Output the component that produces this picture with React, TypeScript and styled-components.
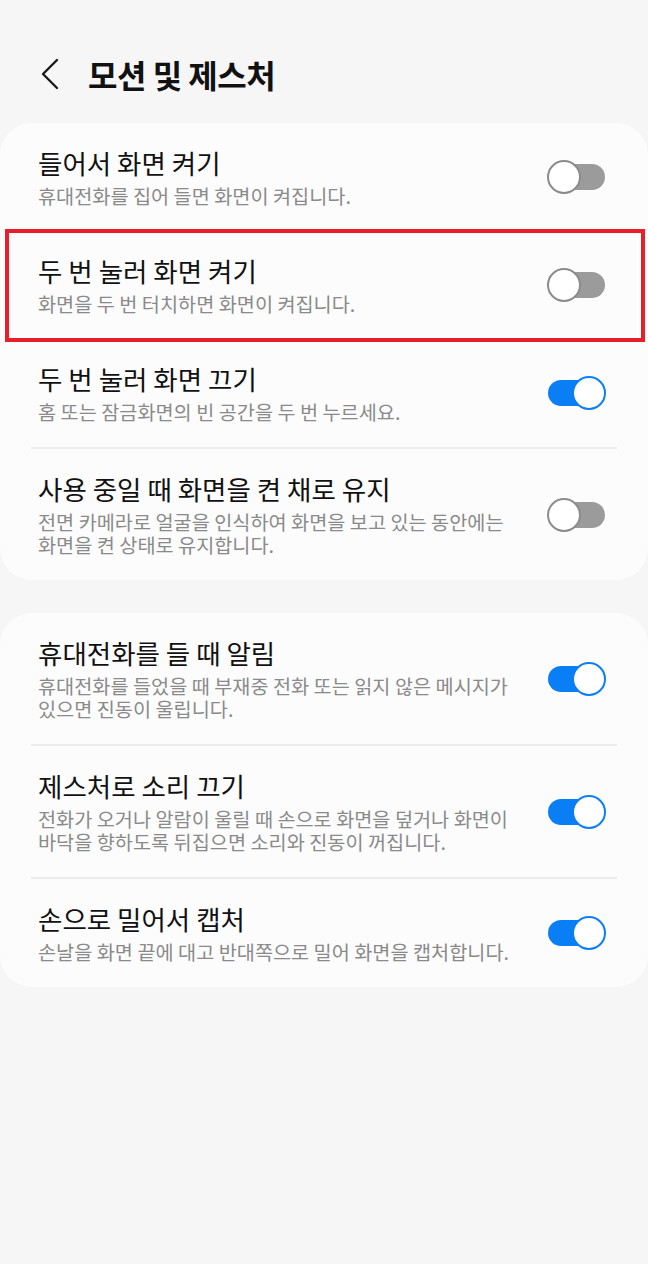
import React from 'react';
import styled, { createGlobalStyle } from 'styled-components';

const GlobalStyle = createGlobalStyle`
  html, body { margin: 0; padding: 0; background: #f6f6f6; }
  body { font-family: "Noto Sans CJK KR", "Noto Sans", sans-serif; }
`;

const Screen = styled.div`
  min-height: 1264px;
  background: #f6f6f6;
  display: flex;
  flex-direction: column;
`;

const Header = styled.header`
  display: flex;
  align-items: center;
  height: 48px;
  padding: 50px 0 25px 36px;
`;

const BackButton = styled.button`
  display: flex;
  align-items: center;
  justify-content: center;
  width: 28px;
  height: 40px;
  padding: 0;
  border: 0;
  background: none;
  margin-right: 24px;
`;

const Title = styled.h1`
  margin: 0;
  font-size: 32px;
  line-height: 48px;
  font-weight: 700;
  color: #111;
  letter-spacing: -0.5px;
`;

const Card = styled.section`
  background: #fcfcfc;
  border-radius: 32px;
  margin-bottom: 33px;
`;

const Row = styled.div<{ $highlighted?: boolean }>`
  position: relative;
  display: flex;
  align-items: center;
  gap: 20px;
  padding: 24px 42px 24px 38px;

  ${({ $highlighted }) =>
    $highlighted &&
    `
    &::after {
      content: '';
      position: absolute;
      left: 5px;
      right: 3px;
      top: -2px;
      bottom: -3px;
      border: 4px solid #e81e2a;
      pointer-events: none;
    }
  `}
`;

const Texts = styled.div`
  flex: 1;
  min-width: 0;
`;

const RowTitle = styled.div`
  font-size: 26.5px;
  line-height: 32px;
  color: #111;
`;

const RowSub = styled.div`
  margin-top: 5px;
  font-size: 19.7px;
  line-height: 23px;
  color: #8a8a8a;
  white-space: nowrap;
`;

const Divider = styled.div`
  height: 2px;
  margin: 0 31px;
  background: #ececec;
`;

const SwitchBox = styled.div`
  position: relative;
  flex-shrink: 0;
  width: 59px;
  height: 34px;
`;

const Track = styled.div<{ $on: boolean }>`
  position: absolute;
  left: 1px;
  right: 1px;
  top: 4px;
  height: 26px;
  border-radius: 13px;
  background: ${({ $on }) => ($on ? '#0a7ff5' : '#9b9b9b')};
`;

const Knob = styled.div<{ $on: boolean }>`
  position: absolute;
  top: 0;
  left: ${({ $on }) => ($on ? '25px' : '0')};
  width: 34px;
  height: 34px;
  box-sizing: border-box;
  border-radius: 50%;
  background: #fff;
  border: 2px solid ${({ $on }) => ($on ? '#0a7ff5' : '#8b8b8b')};
`;

const Switch = ({ on }: { on: boolean }) => (
  <SwitchBox>
    <Track $on={on} />
    <Knob $on={on} />
  </SwitchBox>
);

type Item = {
  title: string;
  sub: string[];
  on: boolean;
  highlighted?: boolean;
  divider?: boolean;
};

const groups: Item[][] = [
  [
    { title: '들어서 화면 켜기', sub: ['휴대전화를 집어 들면 화면이 켜집니다.'], on: false },
    { title: '두 번 눌러 화면 켜기', sub: ['화면을 두 번 터치하면 화면이 켜집니다.'], on: false, highlighted: true },
    { title: '두 번 눌러 화면 끄기', sub: ['홈 또는 잠금화면의 빈 공간을 두 번 누르세요.'], on: true, divider: true },
    {
      title: '사용 중일 때 화면을 켠 채로 유지',
      sub: ['전면 카메라로 얼굴을 인식하여 화면을 보고 있는 동안에는', '화면을 켠 상태로 유지합니다.'],
      on: false,
    },
  ],
  [
    {
      title: '휴대전화를 들 때 알림',
      sub: ['휴대전화를 들었을 때 부재중 전화 또는 읽지 않은 메시지가', '있으면 진동이 울립니다.'],
      on: true,
      divider: true,
    },
    {
      title: '제스처로 소리 끄기',
      sub: ['전화가 오거나 알람이 울릴 때 손으로 화면을 덮거나 화면이', '바닥을 향하도록 뒤집으면 소리와 진동이 꺼집니다.'],
      on: true,
      divider: true,
    },
    { title: '손으로 밀어서 캡처', sub: ['손날을 화면 끝에 대고 반대쪽으로 밀어 화면을 캡처합니다.'], on: true },
  ],
];

const App = () => (
  <Screen>
    <GlobalStyle />
    <Header>
      <BackButton aria-label="뒤로">
        <svg width="20" height="32" viewBox="0 0 20 32" fill="none">
          <polyline points="17,2 3,16 17,30" stroke="#1a1a1a" strokeWidth="2.4" strokeLinecap="round" strokeLinejoin="round" />
        </svg>
      </BackButton>
      <Title>모션 및 제스처</Title>
    </Header>
    {groups.map((items, gi) => (
      <Card key={gi}>
        {items.map((it, i) => (
          <React.Fragment key={i}>
            <Row $highlighted={it.highlighted}>
              <Texts>
                <RowTitle>{it.title}</RowTitle>
                <RowSub>
                  {it.sub.map((line, li) => (
                    <div key={li}>{line}</div>
                  ))}
                </RowSub>
              </Texts>
              <Switch on={it.on} />
            </Row>
            {it.divider && <Divider />}
          </React.Fragment>
        ))}
      </Card>
    ))}
  </Screen>
);

export default App;
